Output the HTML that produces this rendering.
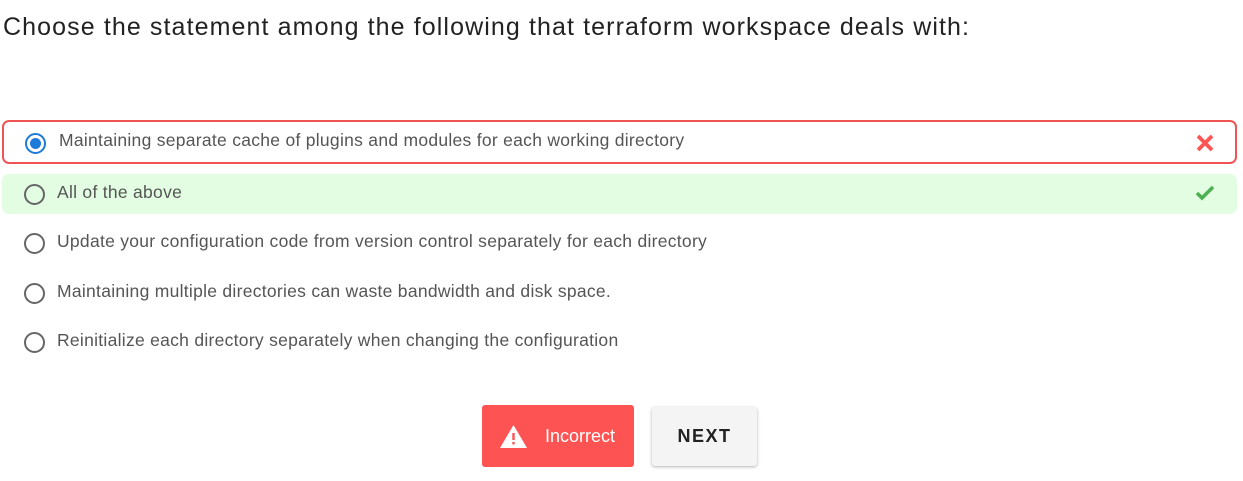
<!DOCTYPE html>
<html><head><style>
body{margin:0;width:1243px;height:481px;background:#fff;font-family:"Liberation Sans",Arial,sans-serif;position:relative;overflow:hidden}
h1{position:absolute;left:3px;top:13px;margin:0;font-weight:normal;font-size:25px;color:#222;letter-spacing:1.1px}
.opt{position:absolute;left:2px;width:1235px;height:40px;box-sizing:border-box;border-radius:7px;font-size:17.5px;color:#555;letter-spacing:0.28px}
.opt .r{position:absolute;left:22px;top:10px;width:17px;height:17px;border:2px solid #666;border-radius:50%}
.opt .t{position:absolute;left:55px;top:8px}
.o1{top:120px;height:44px;border:2px solid #f05454}
.o1 .r{left:21px;top:11px;border-color:#1e7ad8}
.o1 .r::after{content:"";position:absolute;left:3px;top:3px;width:11px;height:11px;border-radius:50%;background:#1e7ad8}
.o1 .t{left:55px;top:8px}
.o2{top:174px;background:#e2fde2}
.btn{position:absolute;top:405px;height:62px;border-radius:3px}
.inc{left:482px;width:152px;background:#fd5353;color:#fff;font-size:18px}
.nxt{left:652px;top:407px;width:105px;height:59px;background:#f4f4f4;box-shadow:0 1px 3px rgba(0,0,0,.3);font-weight:bold;font-size:18px;letter-spacing:1.5px;color:#222;text-align:center;line-height:59px}
</style></head><body>
<h1>Choose the statement among the following that terraform workspace deals with:</h1>
<div class="opt o1"><div class="r"></div><div class="t">Maintaining separate cache of plugins and modules for each working directory</div>
<svg style="position:absolute;left:1191px;top:11px" width="20" height="20" viewBox="0 0 20 20"><path d="M3 3L17 17M17 3L3 17" stroke="#f55" stroke-width="3.8"/></svg></div>
<div class="opt o2"><div class="r"></div><div class="t">All of the above</div>
<svg style="position:absolute;left:1193px;top:11px" width="20" height="16" viewBox="0 0 20 16"><path d="M2 8L7 13L18 2" fill="none" stroke="#4caf50" stroke-width="3.5"/></svg></div>
<div class="opt" style="top:223px"><div class="r"></div><div class="t">Update your configuration code from version control separately for each directory</div></div>
<div class="opt" style="top:273px"><div class="r"></div><div class="t">Maintaining multiple directories can waste bandwidth and disk space.</div></div>
<div class="opt" style="top:322px"><div class="r"></div><div class="t">Reinitialize each directory separately when changing the configuration</div></div>
<div class="btn inc"><svg style="position:absolute;left:18px;top:20px" width="27" height="23" viewBox="0 0 27 23"><path d="M13.5 0L27 23H0Z" fill="#fff"/><rect x="12.3" y="8" width="2.4" height="7" fill="#fd5353"/><rect x="12.3" y="17" width="2.4" height="2.4" fill="#fd5353"/></svg><span style="position:absolute;left:63px;top:21px">Incorrect</span></div>
<div class="btn nxt">NEXT</div>
</body></html>
